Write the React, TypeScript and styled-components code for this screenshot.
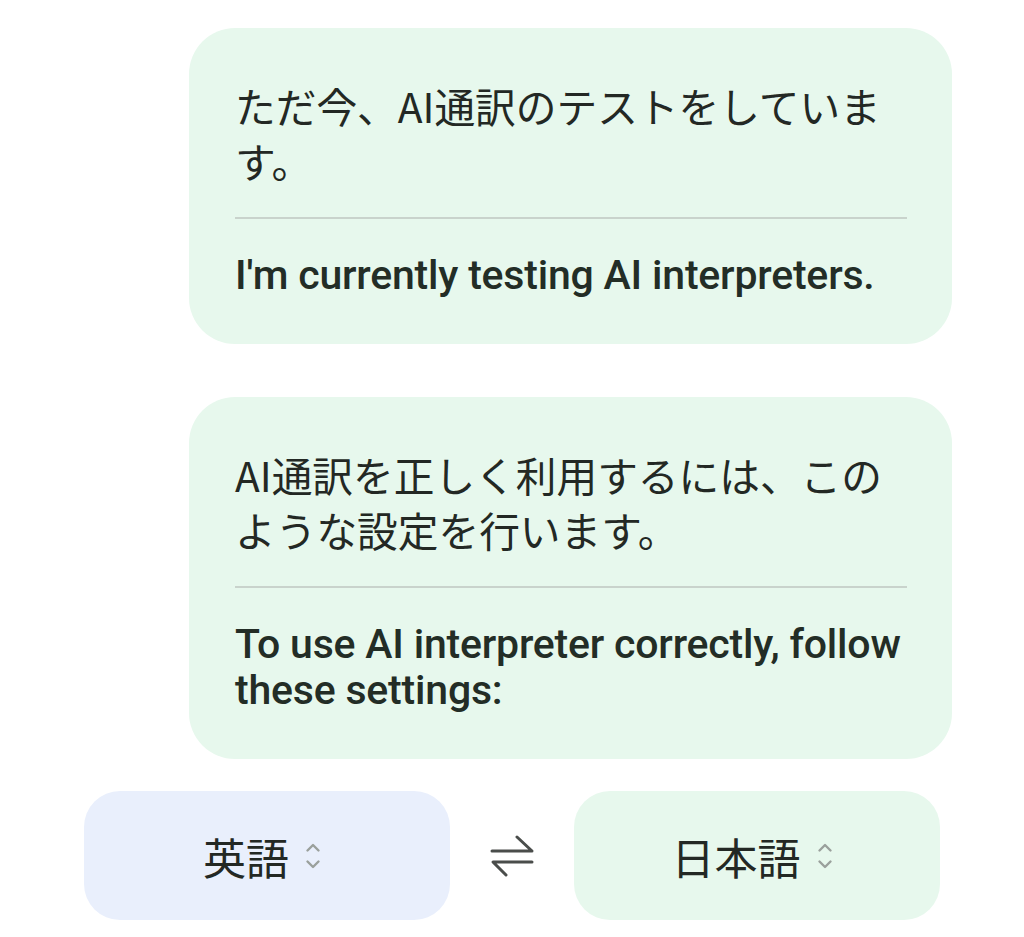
import React from 'react'
import styled, { createGlobalStyle } from 'styled-components'

const GlobalStyle = createGlobalStyle`
  html, body {
    margin: 0;
    padding: 0;
    background: #ffffff;
  }
  body {
    font-family: Roboto, "Noto Sans CJK JP", sans-serif;
    color: #1f2621;
  }
`

const Page = styled.div`
  width: 1024px;
  min-height: 937px;
  box-sizing: border-box;
  padding: 28px 0 0 0;
  display: flex;
  flex-direction: column;
`

const Thread = styled.div`
  display: flex;
  flex-direction: column;
  align-items: flex-end;
  padding-right: 72px;
`

const Bubble = styled.div<{ $gap?: number }>`
  width: 763px;
  box-sizing: border-box;
  background: #e7f8ed;
  border-radius: 46px;
  padding: 50px 45px 46px 46px;
  margin-bottom: ${(p) => p.$gap ?? 0}px;
`

const Source = styled.p`
  margin: 0;
  font-family: "Noto Sans CJK JP", sans-serif;
  font-size: 40.7px;
  line-height: 55px;
  font-weight: 400;
  color: #232824;
`

const Divider = styled.hr`
  border: none;
  height: 2px;
  background: #c9d3cc;
  margin: 29px 0 33px 0;
`

const Translation = styled.p`
  margin: 0;
  font-family: Roboto, sans-serif;
  font-size: 41px;
  line-height: 46px;
  font-weight: 500;
  letter-spacing: -0.2px;
  color: #232d26;
`

const LangBar = styled.div`
  display: flex;
  align-items: center;
  justify-content: space-between;
  padding: 0 84px;
`

const LangButton = styled.button<{ $tone: 'blue' | 'green' }>`
  width: 366px;
  height: 129px;
  border: none;
  border-radius: 36px;
  background: ${(p) => (p.$tone === 'blue' ? '#e9effc' : '#e7f8ed')};
  display: flex;
  align-items: center;
  justify-content: center;
  gap: 16px;
  padding: 0 10px 0 0;
  cursor: pointer;
`

const LangLabel = styled.span`
  font-family: "Noto Sans CJK JP", sans-serif;
  font-size: 43px;
  font-weight: 400;
  color: #232824;
`

const SwapButton = styled.button`
  width: 60px;
  height: 60px;
  border: none;
  background: transparent;
  display: flex;
  align-items: center;
  justify-content: center;
  padding: 0;
`

const Chevrons = () => (
  <svg width="16" height="30" viewBox="0 0 16 30" fill="none">
    <path d="M2.5 9.5 L8 4 L13.5 9.5" stroke="#9aa09c" strokeWidth="2.4" strokeLinecap="round" strokeLinejoin="round" />
    <path d="M2.5 20.5 L8 26 L13.5 20.5" stroke="#9aa09c" strokeWidth="2.4" strokeLinecap="round" strokeLinejoin="round" />
  </svg>
)

const SwapIcon = () => (
  <svg width="46" height="44" viewBox="0 0 46 44" fill="none">
    <path d="M3 17 H43 L28 3" stroke="#4a4d4b" strokeWidth="3" strokeLinecap="round" strokeLinejoin="round" />
    <path d="M43 28 H4 L17 41" stroke="#4a4d4b" strokeWidth="3" strokeLinecap="round" strokeLinejoin="round" />
  </svg>
)

function App() {
  return (
    <>
      <GlobalStyle />
      <Page>
        <Thread>
          <Bubble $gap={53}>
            <Source>ただ今、AI通訳のテストをしています。</Source>
            <Divider />
            <Translation>I'm currently testing AI interpreters.</Translation>
          </Bubble>
          <Bubble $gap={32}>
            <Source>AI通訳を正しく利用するには、このような設定を行います。</Source>
            <Divider />
            <Translation>To use AI interpreter correctly, follow these settings:</Translation>
          </Bubble>
        </Thread>
        <LangBar>
          <LangButton $tone="blue">
            <LangLabel>英語</LangLabel>
            <Chevrons />
          </LangButton>
          <SwapButton aria-label="swap">
            <SwapIcon />
          </SwapButton>
          <LangButton $tone="green">
            <LangLabel>日本語</LangLabel>
            <Chevrons />
          </LangButton>
        </LangBar>
      </Page>
    </>
  )
}

export default App
